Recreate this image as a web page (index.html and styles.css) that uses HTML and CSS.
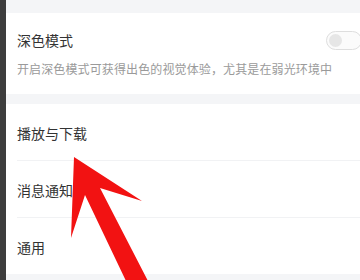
FILE: index.html
```html
<!DOCTYPE html>
<html lang="zh">
<head>
<meta charset="utf-8">
<link rel="stylesheet" href="styles.css">
</head>
<body>
<div class="screen">
  <div class="edge"></div>
  <div class="page">
    <div class="band top"></div>
    <section class="card dark-card">
      <div class="dark-head">
        <span class="title">深色模式</span>
        <span class="toggle"><span class="knob"></span></span>
      </div>
      <p class="desc">开启深色模式可获得出色的视觉体验，尤其是在弱光环境中</p>
    </section>
    <div class="band mid"></div>
    <section class="card list">
      <div class="row"><span class="title">播放与下载</span><span class="chev"></span></div>
      <div class="row"><span class="title">消息通知</span><span class="chev"></span></div>
      <div class="row last"><span class="title">通用</span><span class="chev"></span></div>
    </section>
    <div class="band bottom"></div>
  </div>
  <svg class="arrow" viewBox="0 0 360 280" width="360" height="280">
    <polygon points="74,157 142,201 100,188 148,281 126,281 85,195 71,238" fill="#f21212"/>
  </svg>
</div>
</body>
</html>
```
FILE: styles.css
```css
html, body {
  margin: 0;
  padding: 0;
  background: #ffffff;
}
.screen {
  position: relative;
  width: 360px;
  height: 280px;
  overflow: hidden;
  display: flex;
  font-family: "Noto Sans CJK SC", "Noto Sans", sans-serif;
}
.edge {
  width: 6px;
  flex: none;
  background: #3d3d3d;
}
.page {
  flex: 1;
  display: flex;
  flex-direction: column;
  background: #f4f5f7;
}
.band.top { height: 13px; flex: none; }
.band.mid { height: 10px; flex: none; }
.band.bottom { flex: 1; }
.card {
  background: #ffffff;
  flex: none;
}
.dark-card {
  height: 81px;
  padding-left: 11px;
  box-sizing: border-box;
  display: flex;
  flex-direction: column;
}
.dark-head {
  height: 20px;
  margin-top: 17px;
  display: flex;
  align-items: center;
  justify-content: space-between;
}
.title {
  font-size: 14px;
  color: #333333;
  line-height: 20px;
}
.toggle {
  width: 36px;
  height: 19px;
  margin-right: -2px;
  border: 1px solid #dedede;
  border-radius: 10px;
  background: #fbfbfb;
  display: flex;
  align-items: center;
  padding-left: 2px;
  box-sizing: border-box;
}
.knob {
  width: 13px;
  height: 13px;
  border-radius: 50%;
  background: #e6e6e6;
}
.desc {
  margin: 10px 0 0;
  font-size: 12px;
  line-height: 18px;
  color: #9a9a9a;
  letter-spacing: 0.12px;
  white-space: nowrap;
}
.list {
  display: flex;
  flex-direction: column;
  padding-left: 11px;
}
.row {
  height: 57px;
  box-sizing: border-box;
  display: flex;
  align-items: center;
  justify-content: space-between;
  border-bottom: 1px solid #f1f2f4;
  padding-top: 2px;
}
.row.last {
  height: 56px;
  border-bottom: none;
}
.chev {
  width: 7px;
  height: 7px;
  border-top: 1px solid #d0d0d0;
  border-right: 1px solid #d0d0d0;
  transform: rotate(45deg);
  margin-right: -5px;
}
.arrow {
  position: absolute;
  left: 0;
  top: 0;
}
```
